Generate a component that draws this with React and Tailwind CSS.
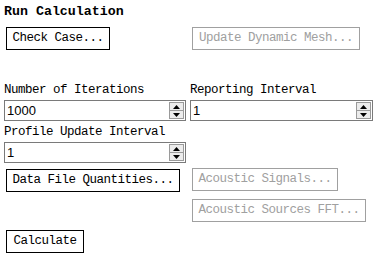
import React from "react";

function Btn({ children, disabled, className = "" }) {
  return (
    <button
      disabled={disabled}
      className={
        "h-[23px] px-[4px] border whitespace-nowrap text-center leading-none " +
        (disabled ? "border-[#a0a0a0] text-[#a0a0a0]" : "border-black text-black") +
        " " +
        className
      }
    >
      {children}
    </button>
  );
}

function Spin({ value, className = "" }) {
  return (
    <div
      className={
        "flex items-center h-[21px] border border-[#7a7a7a] bg-white " + className
      }
    >
      <span className="flex-1 pl-[2px] font-['Liberation_Sans',sans-serif] text-[13px] tracking-normal leading-none">
        {value}
      </span>
      <div className="flex flex-col w-[15px] h-[17px] mr-[1px] border border-[#9a9a9a] bg-[#ececec]">
        <div className="flex-1 flex items-center justify-center border-b border-[#9a9a9a]">
          <svg width="7" height="4" viewBox="0 0 7 4">
            <path d="M3.5 0 L7 4 L0 4 Z" fill="#000" />
          </svg>
        </div>
        <div className="flex-1 flex items-center justify-center">
          <svg width="7" height="4" viewBox="0 0 7 4">
            <path d="M0 0 L7 0 L3.5 4 Z" fill="#000" />
          </svg>
        </div>
      </div>
    </div>
  );
}

export default function App() {
  return (
    <div className="w-[387px] h-[257px] bg-white text-black font-['Liberation_Mono',monospace] text-[12.5px] tracking-[-0.5px] px-1 pt-[5px]">
      <div className="font-bold text-[13.3px] tracking-normal leading-[14px]">Run Calculation</div>

      <div className="flex mt-[8px]">
        <Btn className="ml-[2px] w-[104px]">Check Case...</Btn>
        <Btn disabled className="ml-[82px] w-[168px]">
          Update Dynamic Mesh...
        </Btn>
      </div>

      <div className="grid grid-cols-[182px_183px] gap-x-[4px] mt-[33px]">
        <div className="leading-[14px]">Number of Iterations</div>
        <div className="leading-[14px]">Reporting Interval</div>
        <Spin value="1000" className="mt-[3px]" />
        <Spin value="1" className="mt-[3px]" />
        <div className="leading-[14px] mt-[4px]">Profile Update Interval</div>
        <div />
        <Spin value="1" className="mt-[3px]" />
        <div />
      </div>

      <div className="flex mt-[6px]">
        <Btn className="ml-[2px] w-[174px]">Data File Quantities...</Btn>
        <div className="flex flex-col gap-[8px] ml-[12px]">
          <Btn disabled className="w-[146px] -mt-[1px]">Acoustic Signals...</Btn>
          <Btn disabled className="w-[174px]">Acoustic Sources FFT...</Btn>
        </div>
      </div>

      <div className="mt-[8px]">
        <Btn className="ml-[2px] w-[78px]">Calculate</Btn>
      </div>
    </div>
  );
}
